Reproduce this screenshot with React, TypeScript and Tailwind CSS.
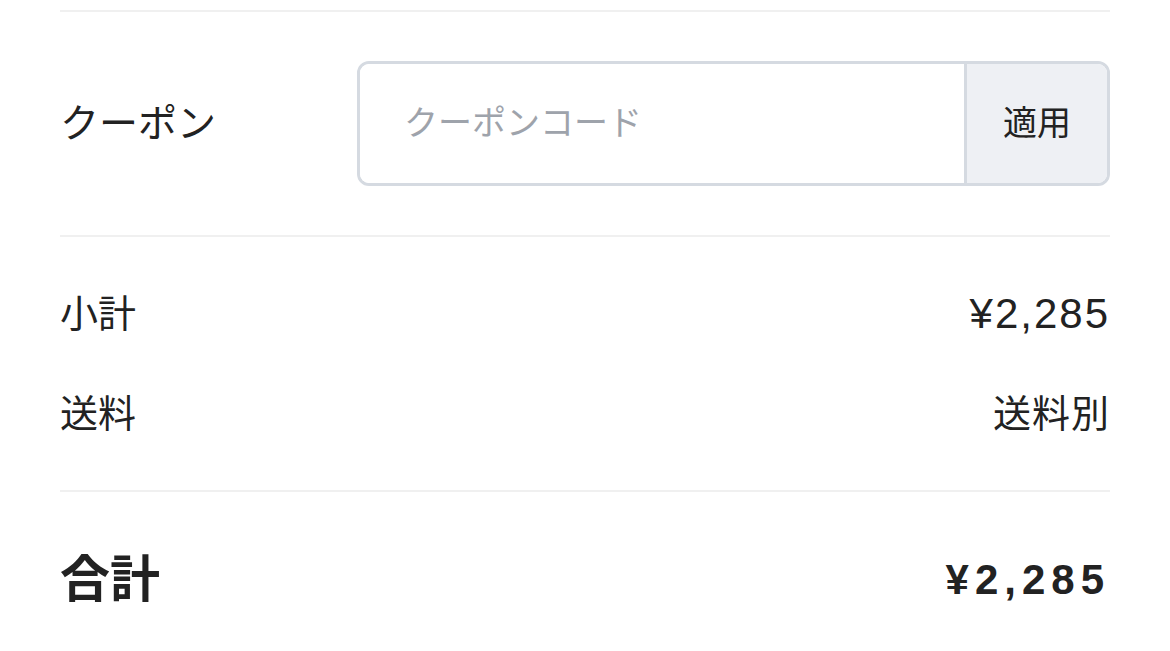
import { useState } from "react";

const font = { fontFamily: '"Liberation Sans", "Noto Sans CJK JP", sans-serif' };

export default function App() {
  const [code, setCode] = useState("");

  return (
    <main className="min-h-screen bg-white text-[#222]" style={font}>
      <div className="px-[60px] pt-[10px]">
        {/* Coupon */}
        <div className="flex items-center border-t-2 border-b-2 border-[#f0f0f0] py-[49px]">
          <span className="w-[297px] shrink-0 text-[39px] leading-[50px]">クーポン</span>
          <div className="flex flex-1 h-[125px] rounded-[12px] border-[3px] border-[#d5dae1] overflow-hidden">
            <input
              value={code}
              onChange={(e) => setCode(e.target.value)}
              placeholder="クーポンコード"
              className="flex-1 min-w-0 bg-white pl-[44px] text-[34px] outline-none placeholder:text-[#9ea3ab]"
            />
            <button className="w-[143px] bg-[#eef0f4] border-l-[3px] border-[#d5dae1] text-[34px] text-[#222]">
              適用
            </button>
          </div>
        </div>

        {/* Summary */}
        <div className="flex flex-col gap-[50px] pt-[52px] pb-[51px] border-b-2 border-[#f0f0f0]">
          <SummaryRow label="小計" value="¥2,285" numeric />
          <SummaryRow label="送料" value="送料別" />
        </div>

        {/* Total */}
        <div className="flex items-center justify-between pt-[58px]">
          <span className="text-[50px] font-bold leading-[60px]">合計</span>
          <span className="text-[42px] font-bold leading-[60px] tracking-[6px]">¥2,285</span>
        </div>
      </div>
    </main>
  );
}

function SummaryRow({ label, value, numeric }: { label: string; value: string; numeric?: boolean }) {
  return (
    <div className="flex items-center justify-between h-[50px]">
      <span className="text-[38px] leading-[50px]">{label}</span>
      <span className={numeric ? "text-[42px] leading-[50px] tracking-[2px]" : "text-[38px] leading-[50px] tracking-[1px]"}>
        {value}
      </span>
    </div>
  );
}
